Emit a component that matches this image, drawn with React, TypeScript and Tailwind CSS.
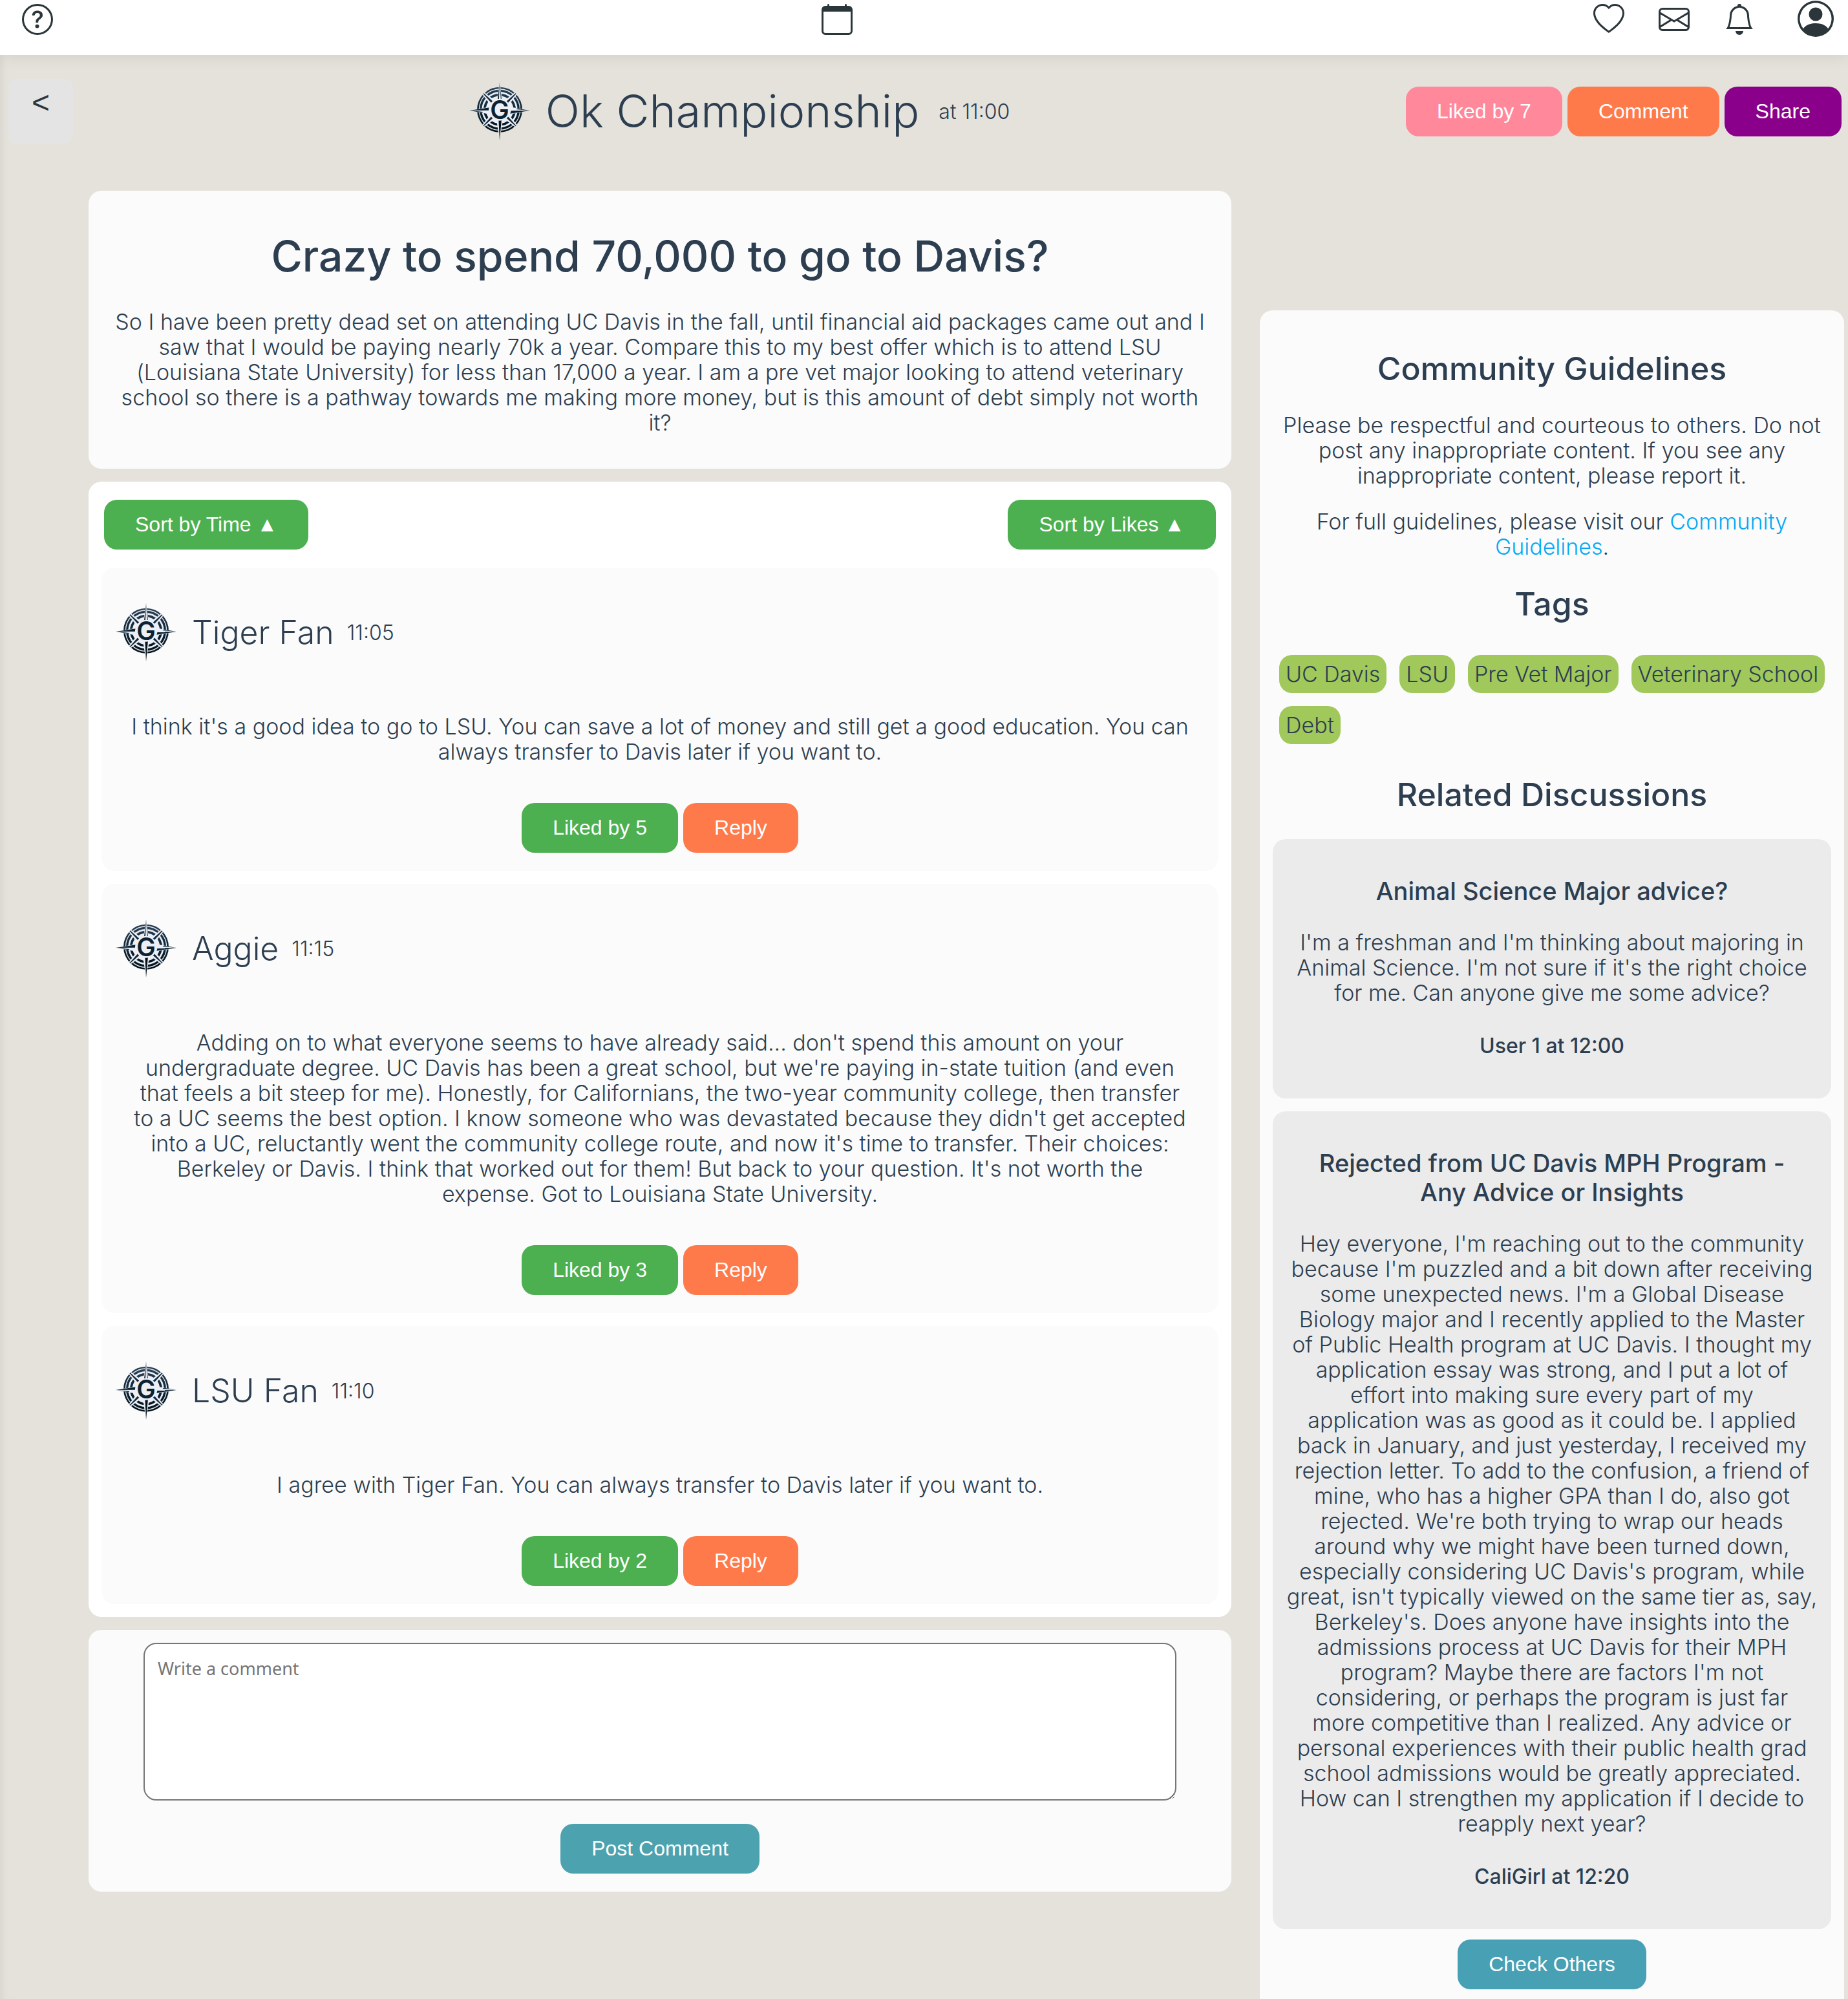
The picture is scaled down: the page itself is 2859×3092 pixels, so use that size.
import type { ReactNode } from "react";
import {
  BsBell,
  BsCalendar,
  BsEnvelope,
  BsHeart,
  BsPersonCircle,
  BsQuestionCircle,
} from "react-icons/bs";

type Comment = { name: string; time: string; text: string; likes: number };
type Discussion = { title: string; text: string; author: string };

const comments: Comment[] = [
  {
    name: "Tiger Fan",
    time: "11:05",
    likes: 5,
    text: "I think it's a good idea to go to LSU. You can save a lot of money and still get a good education. You can always transfer to Davis later if you want to.",
  },
  {
    name: "Aggie",
    time: "11:15",
    likes: 3,
    text: "Adding on to what everyone seems to have already said... don't spend this amount on your undergraduate degree. UC Davis has been a great school, but we're paying in-state tuition (and even that feels a bit steep for me). Honestly, for Californians, the two-year community college, then transfer to a UC seems the best option. I know someone who was devastated because they didn't get accepted into a UC, reluctantly went the community college route, and now it's time to transfer. Their choices: Berkeley or Davis. I think that worked out for them! But back to your question. It's not worth the expense. Got to Louisiana State University.",
  },
  {
    name: "LSU Fan",
    time: "11:10",
    likes: 2,
    text: "I agree with Tiger Fan. You can always transfer to Davis later if you want to.",
  },
];

const tags = ["UC Davis", "LSU", "Pre Vet Major", "Veterinary School", "Debt"];

const discussions: Discussion[] = [
  {
    title: "Animal Science Major advice?",
    text: "I'm a freshman and I'm thinking about majoring in Animal Science. I'm not sure if it's the right choice for me. Can anyone give me some advice?",
    author: "User 1 at 12:00",
  },
  {
    title: "Rejected from UC Davis MPH Program - Any Advice or Insights",
    text: `Hey everyone, I'm reaching out to the community
because I'm puzzled and a bit down after receiving
some unexpected news. I'm a Global Disease
Biology major and I recently applied to the Master
of Public Health program at UC Davis. I thought my
application essay was strong, and I put a lot of
effort into making sure every part of my
application was as good as it could be. I applied
back in January, and just yesterday, I received my
rejection letter. To add to the confusion, a friend of
mine, who has a higher GPA than I do, also got
rejected. We're both trying to wrap our heads
around why we might have been turned down,
especially considering UC Davis's program, while
great, isn't typically viewed on the same tier as, say,
Berkeley's. Does anyone have insights into the
admissions process at UC Davis for their MPH
program? Maybe there are factors I'm not
considering, or perhaps the program is just far
more competitive than I realized. Any advice or
personal experiences with their public health grad
school admissions would be greatly appreciated.
How can I strengthen my application if I decide to
reapply next year?`,
    author: "CaliGirl at 12:20",
  },
];

function Compass() {
  return (
    <svg viewBox="0 0 282 270" className="h-[90px] w-[94px] shrink-0" aria-hidden="true">
      <defs>
        <linearGradient id="ink" x1="0" y1="0" x2="0" y2="1">
          <stop offset="0" stopColor="#2c4257" />
          <stop offset="0.55" stopColor="#0b2233" />
          <stop offset="1" stopColor="#04121b" />
        </linearGradient>
      </defs>
      <circle cx="141" cy="128" r="105" fill="url(#ink)" />
      <circle cx="141" cy="128" r="95" fill="none" stroke="#dfe5ea" strokeWidth="4" />
      <circle cx="141" cy="128" r="79" fill="none" stroke="#eceff5" strokeWidth="8" />
      <circle cx="141" cy="128" r="64" fill="#eceff5" />
      {[45, 135, 225, 315].map((a) => (
        <g key={a} transform={`rotate(${a} 141 128)`}>
          <path d="M128 70 L134 23 L148 23 L154 70 Z" fill="#eceff5" />
          <path d="M136 78 L139 22 L143 22 L146 78 Z" fill="#12293a" />
        </g>
      ))}
      <path d="M141 0 L156 100 L126 100 Z" fill="#eceff5" />
      <path d="M141 0 L130 98 L137 98 Z" fill="url(#ink)" />
      <path d="M141 0 L152 96 L147 96 Z" fill="#2c4257" />
      <path d="M141 270 L126 174 L156 174 Z" fill="#eceff5" />
      <path d="M141 270 L150 172 L136 172 Z" fill="#04121b" />
      <path d="M0 132 L96 115 L96 149 Z" fill="#eceff5" />
      <path d="M0 132 L94 118 L90 131 Z" fill="#0b2233" />
      <path d="M0 132 L60 142 L64 138 Z" fill="#0b2233" />
      <path d="M282 132 L188 115 L188 149 Z" fill="#eceff5" />
      <path d="M282 132 L190 146 L194 133 Z" fill="#0b2233" />
      <path d="M282 132 L222 122 L218 126 Z" fill="#0b2233" />
      <circle cx="141" cy="128" r="51" fill="#eceff5" />
      <text
        x="141"
        y="170"
        textAnchor="middle"
        fontSize="118"
        fontWeight="600"
        fontFamily="Inter, sans-serif"
        fill="#0b2233"
      >
        G
      </text>
    </svg>
  );
}

function Button({ color, children }: { color: string; children: ReactNode }) {
  return (
    <button
      type="button"
      className={`rounded-[20px] px-12 py-5 font-['Liberation_Sans',Arial,sans-serif] text-[32px] leading-[37px] font-normal whitespace-nowrap text-white ${color}`}
    >
      {children}
    </button>
  );
}

function CommentCard({ comment }: { comment: Comment }) {
  return (
    <article className="rounded-[20px] bg-[#fbfbfb] pb-7">
      <header className="flex h-[200px] items-center pl-[22px]">
        <Compass />
        <h3 className="ml-6 text-[50px] leading-[58px] font-light">{comment.name}</h3>
        <span className="ml-5 text-[32px] leading-[39px] font-light">{comment.time}</span>
      </header>
      <p className="mt-[26px] mb-[60px] px-10 text-center">{comment.text}</p>
      <div className="flex justify-center gap-2">
        <Button color="bg-[#4caf50]">Liked by {comment.likes}</Button>
        <Button color="bg-[#ff7a4a]">Reply</Button>
      </div>
    </article>
  );
}

function DiscussionCard({ discussion }: { discussion: Discussion }) {
  return (
    <article className="rounded-[20px] bg-[#ebebeb] px-4 pt-[58px] pb-[62px] text-center">
      <h3 className="mb-[37px] px-6 text-[38px] leading-[45px] font-medium">{discussion.title}</h3>
      <p className="whitespace-pre-line">{discussion.text}</p>
      <h4 className="mt-[43px] text-[32px] leading-[39px] font-medium">{discussion.author}</h4>
    </article>
  );
}

function SideHeading({ children }: { children: ReactNode }) {
  return <h2 className="text-center text-[50px] leading-[58px] font-medium">{children}</h2>;
}

export default function App() {
  return (
    <div className="flex min-h-screen flex-col bg-[#e5e2db] font-[Inter,sans-serif] text-[34px] leading-[39px] font-light text-[#2c3e50]">
      <nav className="relative flex h-[85px] items-start justify-between bg-white pt-px pr-[22px] pl-[34px] text-[#2b363a] shadow-[0_0_24px_rgba(0,0,0,0.1)]">
        <div className="flex pt-[5px] pr-[42px]">
          <button type="button" aria-label="Help">
            <BsQuestionCircle size={48} />
          </button>
        </div>
        <button type="button" aria-label="Calendar" className="pt-[5px]">
          <BsCalendar size={48} />
        </button>
        <div className="flex items-start">
          <button type="button" aria-label="Likes" className="mr-[53px] pt-[5px]">
            <BsHeart size={48} />
          </button>
          <button type="button" aria-label="Messages" className="mr-[53px] pt-[5px]">
            <BsEnvelope size={48} />
          </button>
          <button type="button" aria-label="Notifications" className="mr-[66px] pt-[5px]">
            <BsBell size={48} />
          </button>
          <button type="button" aria-label="Account">
            <BsPersonCircle size={56} />
          </button>
        </div>
      </nav>

      <main className="flex-1 shadow-[inset_12px_0_14px_-12px_rgba(0,0,0,0.1)]">
        <div className="flex items-center pt-[37px] pr-[10px] pb-[73px] pl-[13px]">
          <button
            type="button"
            aria-label="Back"
            className="size-[100px] rounded-[12px] bg-[#e4e4e4] pb-[26px] font-['Liberation_Sans',Arial,sans-serif] text-[48px] leading-[48px] font-normal text-[#2b363a]"
          >
            &lt;
          </button>
          <div className="flex flex-1 items-center justify-center">
            <Compass />
            <h1 className="ml-6 text-[70px] leading-[78px] font-light">Ok Championship</h1>
            <span className="ml-[30px] text-[32px]">at 11:00</span>
          </div>
          <div className="flex gap-2">
            <Button color="bg-[#ff889b]">Liked by 7</Button>
            <Button color="bg-[#ff7a4a]">Comment</Button>
            <Button color="bg-[#8b008b]">Share</Button>
          </div>
        </div>

        <div className="grid grid-cols-[minmax(0,1768fr)_minmax(0,904fr)] items-start gap-[44px] pr-[6px] pl-[137px]">
          <div className="flex flex-col gap-5">
            <section className="rounded-[20px] bg-[#fbfbfb] px-9 pt-[62px] pb-[52px] text-center">
              <h2 className="mb-[43px] text-[66px] leading-[78px] font-medium">
                Crazy to spend 70,000 to go to Davis?
              </h2>
              <p>
                So I have been pretty dead set on attending UC Davis in the fall, until financial aid
                packages came out and I saw that I would be paying nearly 70k a year. Compare this to
                my best offer which is to attend LSU (Louisiana State University) for less than 17,000
                a year. I am a pre vet major looking to attend veterinary school so there is a pathway
                towards me making more money, but is this amount of debt simply not worth it?
              </p>
            </section>

            <section className="flex flex-col gap-5 rounded-[20px] bg-white px-5 pt-7 pb-5">
              <div className="mb-2 flex justify-between px-1">
                <Button color="bg-[#4caf50]">Sort by Time ▲</Button>
                <Button color="bg-[#4caf50]">Sort by Likes ▲</Button>
              </div>
              {comments.map((c) => (
                <CommentCard key={c.name} comment={c} />
              ))}
            </section>

            <form className="flex flex-col items-center rounded-[20px] bg-[#fbfbfb] px-[85px] pt-5 pb-7">
              <textarea
                aria-label="Write a comment"
                placeholder="Write a comment"
                className="mb-9 h-[244px] w-full rounded-[20px] border-2 border-[#767676] bg-white px-5 py-[18px] font-['Noto_Sans',sans-serif] text-[27px] leading-[39px] font-normal placeholder:text-[#757575]"
              />
              <Button color="bg-[#4ca2af]">Post Comment</Button>
            </form>
          </div>

          <aside className="mt-[185px] rounded-t-[20px] bg-[#fbfbfb] px-5 pt-[61px] pb-[15px]">
            <SideHeading>Community Guidelines</SideHeading>
            <p className="mt-[39px] px-[10px] text-center">
              Please be respectful and courteous to others. Do not post any inappropriate content. If
              you see any inappropriate content, please report it.
            </p>
            <p className="mt-8 mb-10 px-[10px] text-center">
              For full guidelines, please visit our{" "}
              <a href="#guidelines" className="text-[#03a9f4]">
                Community Guidelines
              </a>
              .
            </p>
            <SideHeading>Tags</SideHeading>
            <ul className="mt-[50px] mb-[49px] flex flex-wrap gap-5 pl-[10px]">
              {tags.map((t) => (
                <li key={t} className="rounded-[20px] bg-[#a0c85b] p-[10px]">
                  {t}
                </li>
              ))}
            </ul>
            <SideHeading>Related Discussions</SideHeading>
            <div className="mt-10 mb-4 flex flex-col gap-5">
              {discussions.map((d) => (
                <DiscussionCard key={d.title} discussion={d} />
              ))}
            </div>
            <div className="flex justify-center">
              <Button color="bg-[#48a0b4]">Check Others</Button>
            </div>
          </aside>
        </div>
      </main>
    </div>
  );
}
